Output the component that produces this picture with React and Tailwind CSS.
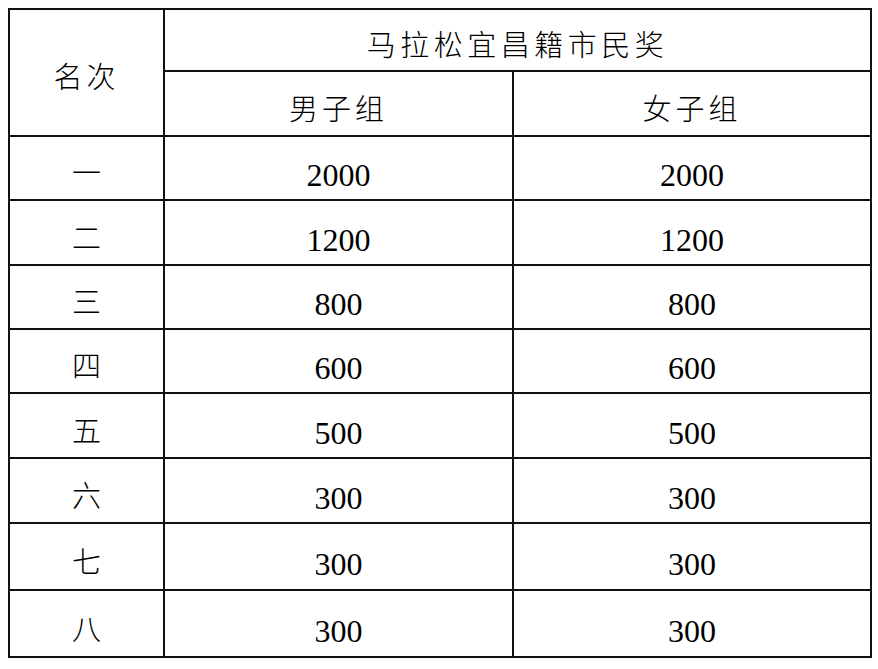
const rows = [
  { rank: '一', men: '2000', women: '2000', h: 'h-[64px]' },
  { rank: '二', men: '1200', women: '1200', h: 'h-[65px]' },
  { rank: '三', men: '800', women: '800', h: 'h-[64px]' },
  { rank: '四', men: '600', women: '600', h: 'h-[64px]' },
  { rank: '五', men: '500', women: '500', h: 'h-[65px]' },
  { rank: '六', men: '300', women: '300', h: 'h-[65px]' },
  { rank: '七', men: '300', women: '300', h: 'h-[67px]' },
  { rank: '八', men: '300', women: '300', h: 'h-[67px]' },
]

const cjk = "font-['Noto_Sans_CJK_SC',sans-serif] font-light"
const num = "font-['Liberation_Serif','Noto_Sans_CJK_SC',serif]"

export default function App() {
  return (
    <div className="w-[878px] h-[669px] bg-white pl-[8px] pt-[8px]">
      <table className="border-collapse table-fixed w-[862px] text-black">
        <colgroup>
          <col className="w-[155px]" />
          <col className="w-[349px]" />
          <col className="w-[358px]" />
        </colgroup>
        <tbody>
          <tr className="h-[62px]">
            <td rowSpan={2} className={`border-2 border-[#111] text-center align-middle pt-[6px] text-[29px] tracking-[4px] ${cjk}`}>
              名次
            </td>
            <td colSpan={2} className={`border-2 border-[#111] text-center align-middle pt-[8px] text-[29px] tracking-[4.5px] ${cjk}`}>
              马拉松宜昌籍市民奖
            </td>
          </tr>
          <tr className="h-[65px]">
            <td className={`border-2 border-[#111] text-center align-middle pt-[8px] text-[29px] tracking-[4px] ${cjk}`}>男子组</td>
            <td className={`border-2 border-[#111] text-center align-middle pt-[8px] text-[29px] tracking-[4px] ${cjk}`}>女子组</td>
          </tr>
          {rows.map((r) => (
            <tr key={r.rank} className={r.h}>
              <td className={`border-2 border-[#111] text-center align-middle pt-[8px] text-[29px] ${cjk}`}>{r.rank}</td>
              <td className={`border-2 border-[#111] text-center align-middle pt-[14px] text-[32px] leading-none ${num}`}>{r.men}</td>
              <td className={`border-2 border-[#111] text-center align-middle pt-[14px] text-[32px] leading-none ${num}`}>{r.women}</td>
            </tr>
          ))}
        </tbody>
      </table>
    </div>
  )
}
